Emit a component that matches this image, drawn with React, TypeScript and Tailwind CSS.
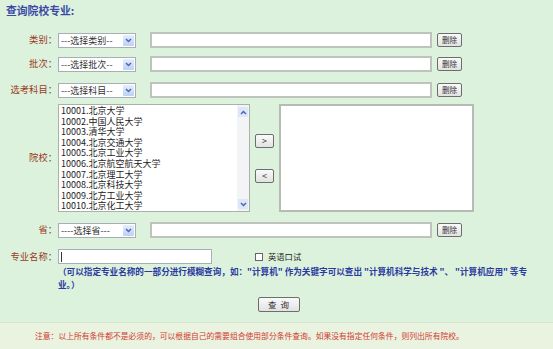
import type { ReactNode } from 'react';

const cjk = '"Noto Sans CJK SC", "Noto Sans", sans-serif';

const schools = [
  '10001.北京大学',
  '10002.中国人民大学',
  '10003.清华大学',
  '10004.北京交通大学',
  '10005.北京工业大学',
  '10006.北京航空航天大学',
  '10007.北京理工大学',
  '10008.北京科技大学',
  '10009.北方工业大学',
  '10010.北京化工大学',
];

function Chevron({ dir }: { dir: 'down' | 'up' }) {
  return (
    <svg width="7" height="5" viewBox="0 0 7 5">
      <path
        d={dir === 'down' ? 'M1 1 L3.5 3.6 L6 1' : 'M1 4 L3.5 1.4 L6 4'}
        fill="none"
        stroke="#4a63b8"
        strokeWidth="1.4"
      />
    </svg>
  );
}

function Label({ children }: { children: ReactNode }) {
  return (
    <div className="flex w-[58px] shrink-0 justify-end pr-[1px] text-[9.3px] leading-none">
      <span className="text-[#9a3a1c]">{children}</span>
      <span className="text-[#555]">：</span>
    </div>
  );
}

function FakeSelect({ text }: { text: string }) {
  return (
    <div className="flex h-[15px] w-[78px] shrink-0 items-center border border-[#a6aeb6] bg-white">
      <span className="flex-1 pl-[2px] text-[9px] leading-none text-[#333]">{text}</span>
      <span className="mr-[1px] flex h-[11px] w-[11px] items-center justify-center rounded-[1px] bg-gradient-to-b from-[#e6eefb] to-[#bcd0f3]">
        <Chevron dir="down" />
      </span>
    </div>
  );
}

function SmallButton({ children, className = '' }: { children: ReactNode; className?: string }) {
  return (
    <div
      className={`flex h-[14px] items-center justify-center rounded-[2px] border border-[#6d6d6d] bg-gradient-to-b from-[#fafafa] to-[#e2e2e2] text-[7.5px] leading-none text-[#333] ${className}`}
    >
      {children}
    </div>
  );
}

function ConditionRow({ label, select, className = '' }: { label: string; select: string; className?: string }) {
  return (
    <div className={`flex h-[16px] items-center ${className}`}>
      <Label>{label}</Label>
      <FakeSelect text={select} />
      <div className="ml-[14px] h-[16px] w-[282px] border-2 border-[#bcc4bc] bg-white" />
      <SmallButton className="ml-[5px] w-[25px]">删除</SmallButton>
    </div>
  );
}

export default function App() {
  return (
    <div className="flex h-[349px] w-[553px] flex-col bg-[#ddf2dd]" style={{ fontFamily: cjk }}>
      <div className="h-[32px] pl-[6px] pt-[3px] text-[10.8px] font-bold leading-[14px] text-[#3b4aa6]">
        查询院校专业:
      </div>

      <ConditionRow label="类别" select="---选择类别--" />
      <ConditionRow label="批次" select="---选择批次--" className="mt-[8px]" />
      <ConditionRow label="选考科目" select="---选择科目--" className="mt-[10px]" />

      <div className="mt-[6px] flex h-[108px] items-center">
        <Label>院校</Label>
        <div className="flex h-[108px] w-[192px] border border-[#a9b1a9] bg-white">
          <div className="flex-1 pl-[2px] pt-[1px] text-[9px] leading-[10.6px] text-[#222]">
            {schools.map((s) => (
              <div key={s} className="whitespace-nowrap">
                {s}
              </div>
            ))}
          </div>
          <div className="flex w-[12px] flex-col items-center justify-between bg-[#f3f4f6] py-[2px]">
            <span className="flex h-[10px] w-[10px] items-center justify-center bg-[#dde7f8]">
              <Chevron dir="up" />
            </span>
            <span className="flex h-[10px] w-[10px] items-center justify-center bg-[#dde7f8]">
              <Chevron dir="down" />
            </span>
          </div>
        </div>
        <div className="flex w-[29px] flex-col items-center gap-[21px]">
          <SmallButton className="w-[19px] text-[9px]">&gt;</SmallButton>
          <SmallButton className="w-[19px] text-[9px]">&lt;</SmallButton>
        </div>
        <div className="h-[108px] w-[195px] border-2 border-[#b4bcb4] bg-white" />
      </div>

      <ConditionRow label="省" select="----选择省---" className="mt-[10px]" />

      <div className="mt-[11px] flex h-[15px] items-center">
        <Label>专业名称</Label>
        <div className="flex h-[15px] w-[154px] items-center border border-[#a6aeb6] bg-white pl-[2px]">
          <span className="h-[10px] w-px bg-[#333]" />
        </div>
        <span className="ml-[43px] h-[8px] w-[8px] border border-[#666] bg-white" />
        <span className="ml-[5px] text-[8.3px] leading-none text-[#222]">英语口试</span>
      </div>

      <div className="pl-[58px] pr-[22px] pt-[1px] text-[8.6px] font-bold leading-[13px] text-[#2b3a9f]">
        （可以指定专业名称的一部分进行模糊查询，如："计算机" 作为关键字可以查出 "计算机科学与技术 "、 "计算机应用" 等专业。）
      </div>

      <div className="mt-[6px] flex justify-center pl-[4px]">
        <SmallButton className="h-[15px] w-[42px] text-[8.5px]">查&nbsp;&nbsp;询</SmallButton>
      </div>

      <div className="mt-auto flex h-[27px] items-center border-t border-[#d6e6cf] bg-[#e9f3e0] pl-[35px] text-[7.8px] leading-none text-[#d33a2e]">
        注意：以上所有条件都不是必须的，可以根据自己的需要组合使用部分条件查询。如果没有指定任何条件，则列出所有院校。
      </div>
    </div>
  );
}
